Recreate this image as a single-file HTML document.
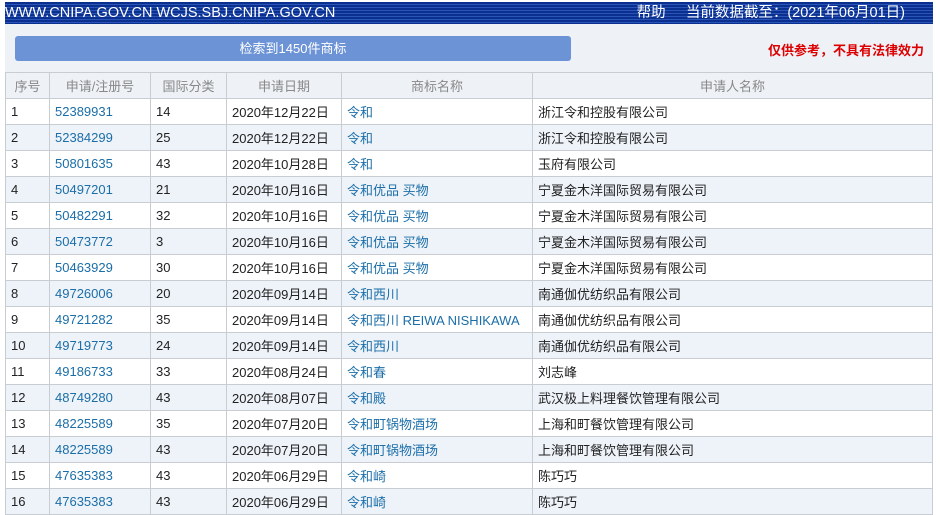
<!DOCTYPE html>
<html><head><meta charset="utf-8"><style>
body{margin:0;width:940px;height:507px;overflow:hidden;background:#fff;font-family:"Liberation Sans","Noto Sans CJK SC",sans-serif;font-size:13px;color:#222;position:relative}
.bar{position:absolute;left:5px;top:2px;width:928px;height:22px;background:repeating-linear-gradient(#0a2f8f 0,#0a2f8f 2px,#2a55b8 2px,#2a55b8 3px);color:#fff;font-size:14.5px;line-height:22px}
.bar .l{position:absolute;left:0}
.bar .r{position:absolute;right:28px}
.bg{position:absolute;left:5px;top:24px;width:928px;height:483px;background:#eef2f7}
.btn{position:absolute;left:15px;top:36px;width:556px;height:25px;background:#6c93d6;border-radius:3px;color:#fff;text-align:center;line-height:25px;font-size:13px}
.warn{position:absolute;right:16px;top:40px;color:#d00;font-weight:bold;font-size:13px}
table{position:absolute;left:5px;top:72px;width:928px;border-collapse:collapse;table-layout:fixed}
td,th{border:1px solid #c8ccd3;height:25px;padding:0 0 0 5px;white-space:nowrap;overflow:hidden;text-align:left;font-weight:normal}
th{color:#888;text-align:center;padding:0;background:#eef2f7;font-size:13px}
tr:nth-child(odd) td{background:#fff}
tr:nth-child(even) td{background:#eef3f9}
a{color:#1b6ea8;text-decoration:none}
</style></head><body>
<div class="bar"><span class="l">WWW.CNIPA.GOV.CN WCJS.SBJ.CNIPA.GOV.CN</span><span class="r">帮助&nbsp;&nbsp;&nbsp;&nbsp;&nbsp;当前数据截至：(2021年06月01日)</span></div>
<div class="bg"></div>
<div class="btn">检索到1450件商标</div>
<div class="warn">仅供参考，不具有法律效力</div>
<table>
<colgroup><col style="width:44px"><col style="width:101px"><col style="width:76px"><col style="width:115px"><col style="width:191px"><col></colgroup>
<thead><tr><th>序号</th><th>申请/注册号</th><th>国际分类</th><th>申请日期</th><th>商标名称</th><th>申请人名称</th></tr></thead>
<tbody>
<tr><td>1</td><td><a>52389931</a></td><td>14</td><td>2020年12月22日</td><td><a>令和</a></td><td>浙江令和控股有限公司</td></tr>
<tr><td>2</td><td><a>52384299</a></td><td>25</td><td>2020年12月22日</td><td><a>令和</a></td><td>浙江令和控股有限公司</td></tr>
<tr><td>3</td><td><a>50801635</a></td><td>43</td><td>2020年10月28日</td><td><a>令和</a></td><td>玉府有限公司</td></tr>
<tr><td>4</td><td><a>50497201</a></td><td>21</td><td>2020年10月16日</td><td><a>令和优品 买物</a></td><td>宁夏金木洋国际贸易有限公司</td></tr>
<tr><td>5</td><td><a>50482291</a></td><td>32</td><td>2020年10月16日</td><td><a>令和优品 买物</a></td><td>宁夏金木洋国际贸易有限公司</td></tr>
<tr><td>6</td><td><a>50473772</a></td><td>3</td><td>2020年10月16日</td><td><a>令和优品 买物</a></td><td>宁夏金木洋国际贸易有限公司</td></tr>
<tr><td>7</td><td><a>50463929</a></td><td>30</td><td>2020年10月16日</td><td><a>令和优品 买物</a></td><td>宁夏金木洋国际贸易有限公司</td></tr>
<tr><td>8</td><td><a>49726006</a></td><td>20</td><td>2020年09月14日</td><td><a>令和西川</a></td><td>南通伽优纺织品有限公司</td></tr>
<tr><td>9</td><td><a>49721282</a></td><td>35</td><td>2020年09月14日</td><td><a>令和西川 REIWA NISHIKAWA</a></td><td>南通伽优纺织品有限公司</td></tr>
<tr><td>10</td><td><a>49719773</a></td><td>24</td><td>2020年09月14日</td><td><a>令和西川</a></td><td>南通伽优纺织品有限公司</td></tr>
<tr><td>11</td><td><a>49186733</a></td><td>33</td><td>2020年08月24日</td><td><a>令和春</a></td><td>刘志峰</td></tr>
<tr><td>12</td><td><a>48749280</a></td><td>43</td><td>2020年08月07日</td><td><a>令和殿</a></td><td>武汉极上料理餐饮管理有限公司</td></tr>
<tr><td>13</td><td><a>48225589</a></td><td>35</td><td>2020年07月20日</td><td><a>令和町锅物酒场</a></td><td>上海和町餐饮管理有限公司</td></tr>
<tr><td>14</td><td><a>48225589</a></td><td>43</td><td>2020年07月20日</td><td><a>令和町锅物酒场</a></td><td>上海和町餐饮管理有限公司</td></tr>
<tr><td>15</td><td><a>47635383</a></td><td>43</td><td>2020年06月29日</td><td><a>令和崎</a></td><td>陈巧巧</td></tr>
<tr><td>16</td><td><a>47635383</a></td><td>43</td><td>2020年06月29日</td><td><a>令和崎</a></td><td>陈巧巧</td></tr>
</tbody></table>
</body></html>
